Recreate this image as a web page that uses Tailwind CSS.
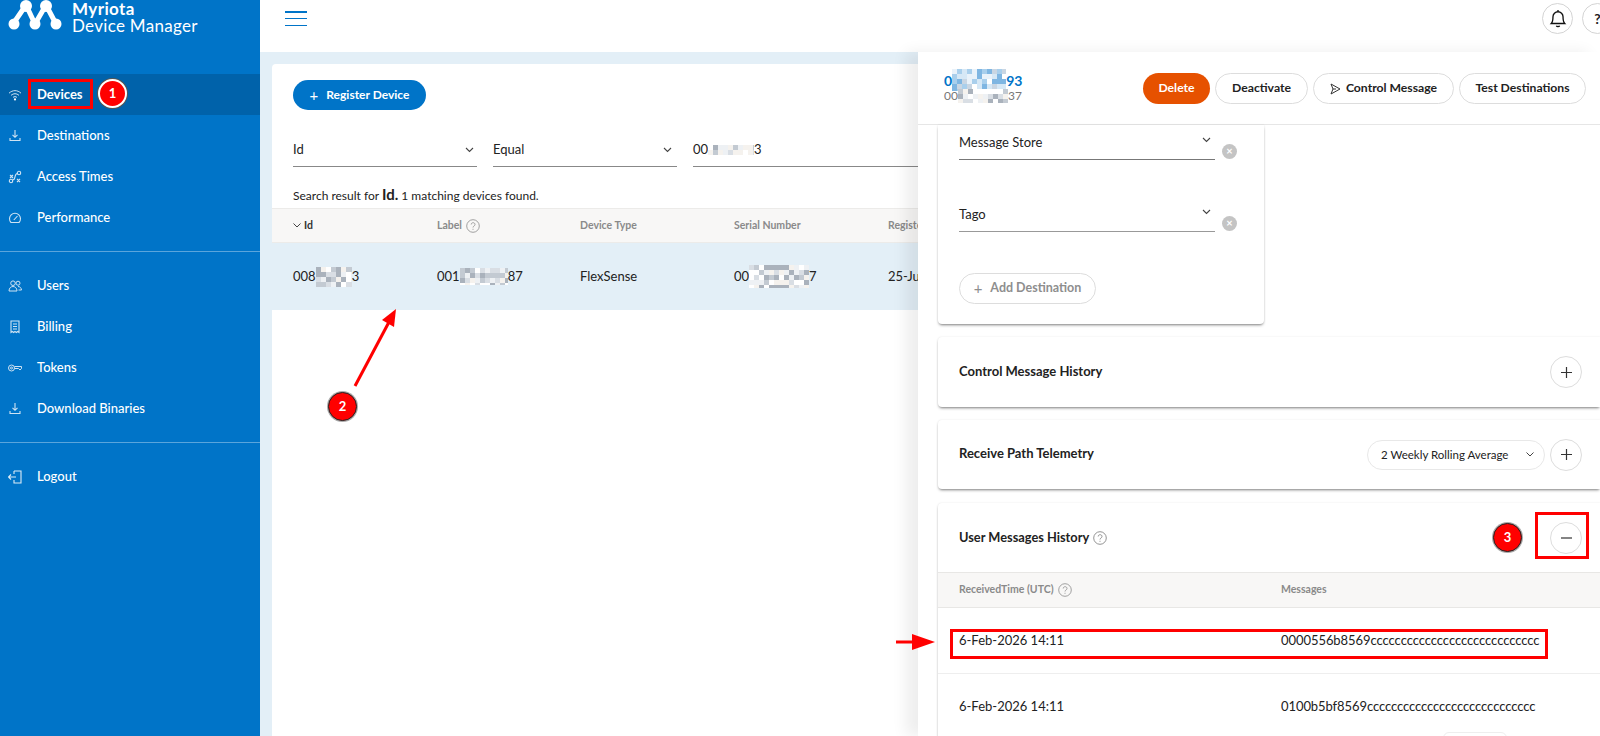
<!DOCTYPE html>
<html lang="en">
<head>
  <meta charset="UTF-8" />
  <title>Myriota Device Manager</title>
  <script src="https://cdn.jsdelivr.net/npm/@tailwindcss/browser@4"></script>
</head>
<body class="relative h-[736px] w-[1600px] overflow-hidden flex bg-white text-[#222] font-['Lato',sans-serif] text-[13px]">

  <!-- Sidebar -->
  <aside class="w-[260px] shrink-0 bg-[#0074c8] text-white font-medium">
    <div class="h-[74px] flex items-start pl-[8px] overflow-hidden">
      <svg class="w-[54px] h-[31px] shrink-0" viewBox="0 0 54 31" fill="none" stroke="#fff">
        <path d="M5 24 L18 5 L27 24 L38 5 L48 24" stroke-width="5" stroke-linejoin="round"/>
        <g fill="#fff" stroke="none">
          <circle cx="6" cy="24" r="5.5"/><circle cx="18" cy="6" r="6"/><circle cx="27" cy="24" r="5.5"/><circle cx="38" cy="6" r="6"/><circle cx="48" cy="24" r="5.5"/>
        </g>
      </svg>
      <div class="ml-[10px] leading-[17px]">
        <div class="text-[17px] font-bold tracking-[0.4px]">Myriota</div>
        <div class="text-[17px] font-normal tracking-[0.3px]">Device Manager</div>
      </div>
    </div>

    <nav>
      <a class="h-[41px] flex items-center bg-[#0062aa] font-bold">
        <svg class="w-[14px] h-[12px] ml-[8px] mr-[15px]" viewBox="0 0 14 12" fill="none" stroke="#cfe3f3" stroke-width="1"><path d="M1 4.200C4.500 .8 9.500 .8 13 4.200M3 6.400c2.400-2.200 5.600-2.200 8 0M5 8.400c1.200-1 2.800-1 4 0"/><circle cx="7" cy="10.400" r="1.100" fill="#fff" stroke="none"/></svg>
        <span>Devices</span>
      </a>
      <a class="h-[41px] flex items-center">
        <svg class="w-[14px] h-[13px] ml-[8px] mr-[15px]" viewBox="0 0 14 13" fill="none" stroke="#cfe3f3" stroke-width="1.100"><path d="M7 1v7M4.500 5.800 7 8.300l2.500-2.500M2 9v2.500h10V9"/></svg>
        <span>Destinations</span>
      </a>
      <a class="h-[41px] flex items-center">
        <svg class="w-[14px] h-[14px] ml-[8px] mr-[15px]" viewBox="0 0 14 14" fill="none" stroke="#cfe3f3" stroke-width="1.100"><circle cx="3" cy="11" r="1.700"/><circle cx="11" cy="3" r="1.700"/><path d="M4.500 10c4 0 1-6 5-6.500M2 5l3 3M5 5 2 8M9 9l3 3M12 9l-3 3"/></svg>
        <span>Access Times</span>
      </a>
      <a class="h-[41px] flex items-center">
        <svg class="w-[14px] h-[12px] ml-[8px] mr-[15px]" viewBox="0 0 14 12" fill="none" stroke="#cfe3f3" stroke-width="1.100"><path d="M3 10.500a5.500 5.500 0 1 1 8 0zM5.800 8 9.500 4"/></svg>
        <span>Performance</span>
      </a>
    </nav>

    <div class="mt-[13px] border-t border-[#5aa5dc]"></div>

    <nav class="mt-[13px]">
      <a class="h-[41px] flex items-center">
        <svg class="w-[14px] h-[12px] ml-[8px] mr-[15px]" viewBox="0 0 14 12" fill="none" stroke="#cfe3f3" stroke-width="1"><circle cx="5" cy="3.200" r="2.300"/><circle cx="10" cy="3.200" r="2"/><path d="M1 11c0-6 8-6 8 0zM10 6.500c2 0 3.300 1.500 3.500 3.500H10.500"/></svg>
        <span>Users</span>
      </a>
      <a class="h-[41px] flex items-center">
        <svg class="w-[12px] h-[14px] ml-[9px] mr-[16px]" viewBox="0 0 12 14" fill="none" stroke="#cfe3f3" stroke-width="1.100"><path d="M2 1h8v11.500l-1.300-1-1.300 1-1.400-1-1.400 1-1.300-1-1.300 1zM4 4h4M4 6.500h4M4 9h4"/></svg>
        <span>Billing</span>
      </a>
      <a class="h-[41px] flex items-center">
        <svg class="w-[14px] h-[8px] ml-[8px] mr-[15px]" viewBox="0 0 14 8" fill="none" stroke="#cfe3f3" stroke-width="1"><circle cx="3.500" cy="4" r="3"/><circle cx="3.500" cy="4" r="1"/><path d="M6.500 2.500h7v2l-1.500 1.500-1.500-1.500H6.500"/></svg>
        <span>Tokens</span>
      </a>
      <a class="h-[41px] flex items-center">
        <svg class="w-[14px] h-[13px] ml-[8px] mr-[15px]" viewBox="0 0 14 13" fill="none" stroke="#cfe3f3" stroke-width="1.100"><path d="M7 1v7M4.500 5.800 7 8.300l2.500-2.500M2 9v2.500h10V9"/></svg>
        <span>Download Binaries</span>
      </a>
    </nav>

    <div class="mt-[13px] border-t border-[#5aa5dc]"></div>

    <a class="mt-[13px] h-[41px] flex items-center">
      <svg class="w-[14px] h-[14px] ml-[8px] mr-[15px]" viewBox="0 0 14 14" fill="none" stroke="#dcebf6" stroke-width="1.100"><path d="M6 1h7v12H6v-3M6 4V1M0.500 7H8M3 4.500.5 7 3 9.500"/></svg>
      <span>Logout</span>
    </a>
  </aside>

  <!-- Main -->
  <main class="flex-1 min-w-0 flex flex-col">
    <header class="h-[52px] shrink-0 bg-white relative">
      <div class="ml-[25px] mt-[11px] w-[22px] h-[15px] flex flex-col justify-between absolute">
        <span class="block h-[1.500px] bg-[#0074c8]"></span>
        <span class="block h-[1.500px] bg-[#0074c8]"></span>
        <span class="block h-[1.500px] bg-[#0074c8]"></span>
      </div>
    </header>

    <div class="flex-1 bg-[#e3eff7] pt-[12px] pl-[12px] pr-[12px] flex flex-col">
      <section class="flex-1 bg-white rounded-t-[4px] pt-[16px]">
        <div class="px-[21px]">
          <button class="h-[30px] w-[133px] rounded-full bg-[#0074c8] text-white text-[12px] font-bold flex items-center justify-center gap-[8px]">
            <span class="text-[15px] font-normal leading-none">+</span><span>Register Device</span>
          </button>

          <div class="mt-[27px] flex items-stretch">
            <div class="w-[184px] h-[30px] border-b border-[#888] flex items-center justify-between pr-[3px] pb-[3px]">
              <span>Id</span>
              <svg class="w-[9px] h-[6px]" viewBox="0 0 9 6" fill="none" stroke="#444" stroke-width="1.100"><path d="M1 1l3.500 3.500L8 1"/></svg>
            </div>
            <div class="ml-[16px] w-[184px] h-[30px] border-b border-[#888] flex items-center justify-between pr-[5px] pb-[3px]">
              <span>Equal</span>
              <svg class="w-[9px] h-[6px]" viewBox="0 0 9 6" fill="none" stroke="#444" stroke-width="1.100"><path d="M1 1l3.500 3.500L8 1"/></svg>
            </div>
            <div class="ml-[16px] w-[260px] h-[30px] border-b border-[#888] flex items-center pb-[3px]">
              <span>00</span><svg data-mosaic="46,10" class="shrink-0"></svg><span>3</span>
            </div>
          </div>

          <p class="mt-[19px] h-[16px] leading-[16px] text-[12px]">Search result for <b class="text-[15px] font-bold">Id.</b> 1 matching devices found.</p>
        </div>

        <div class="mt-[6px] h-[35px] bg-[#f8f7f6] border-y border-[#ecebe9] px-[21px] grid grid-cols-[144px_143px_154px_154px_1fr] items-center text-[10.500px] font-bold text-[#8a8a8a]">
          <div class="flex items-center gap-[3px] text-[#333]">
            <svg class="w-[8px] h-[5px]" viewBox="0 0 8 5" fill="none" stroke="#444" stroke-width="1"><path d="M.5.500 4 4 7.500.5"/></svg>Id
          </div>
          <div class="flex items-center gap-[4px]">Label
            <svg class="w-[14px] h-[14px]" viewBox="0 0 14 14" fill="none" stroke="#8a8a8a" stroke-width=".8"><circle cx="7" cy="7" r="6.300"/><path d="M5.200 5.500c0-2.400 3.800-2.400 3.800 0 0 1.500-2 1.500-2 3M7 9.800v1"/></svg>
          </div>
          <div>Device Type</div>
          <div>Serial Number</div>
          <div>Registered</div>
        </div>

        <div class="h-[67px] bg-[#e3eff7] px-[21px] grid grid-cols-[144px_143px_154px_154px_1fr] items-center">
          <div class="flex items-center"><span>008</span><svg data-mosaic="36,20" class="shrink-0"></svg><span>3</span></div>
          <div class="flex items-center"><span>001</span><svg data-mosaic="48,17" class="shrink-0"></svg><span>87</span></div>
          <div>FlexSense</div>
          <div class="flex items-center"><span>00</span><svg data-mosaic="60,23" class="shrink-0"></svg><span>7</span></div>
          <div>25-Jun-2025</div>
        </div>
      </section>
    </div>
  </main>

  <!-- Top right buttons -->
  <div class="absolute top-[3px] left-[1542px] flex gap-[9px]">
    <div class="w-[31px] h-[31px] rounded-full border border-[#d4d4d4] bg-white flex items-center justify-center">
      <svg class="w-[18px] h-[19px]" viewBox="0 0 16 17" fill="none" stroke="#111" stroke-width="1.200"><path d="M2 13c1.500-1.500 1.500-3 1.500-6a4.500 4.500 0 0 1 9 0c0 3 0 4.500 1.500 6zM6.500 15c.5 1 2.500 1 3 0M8 1v1.500"/></svg>
    </div>
    <div class="w-[31px] h-[31px] rounded-full border border-[#d4d4d4] bg-white flex items-center justify-center text-[14px] font-bold">?</div>
  </div>

  <!-- Device drawer -->
  <aside class="absolute left-[918px] top-[52px] right-0 bottom-0 bg-white shadow-[-12px_0_14px_rgba(0,0,0,0.07)] flex flex-col overflow-hidden">
    <div class="h-[73px] shrink-0 border-b border-[#e6e6e6] flex items-start justify-between pl-[26px] pr-[14px]">
      <div class="pt-[20px]">
        <div class="h-[16px] flex items-center text-[#0074c8] text-[14px] font-bold"><span>0</span><svg data-mosaic="54,22" data-tone="blue" class="shrink-0"></svg><span>93</span></div>
        <div class="h-[14px] mt-[1px] flex items-center text-[#777] text-[12px]"><span>00</span><svg data-mosaic="50,14" class="shrink-0"></svg><span>37</span></div>
      </div>
      <div class="pt-[21px] flex gap-[5px] text-[12.200px] font-bold">
        <button class="w-[67px] h-[31px] rounded-full bg-[#e65100] text-white">Delete</button>
        <button class="w-[93px] h-[31px] rounded-full border border-[#ddd] bg-white">Deactivate</button>
        <button class="w-[141px] h-[31px] rounded-full border border-[#ddd] bg-white flex items-center justify-center gap-[5px]">
          <svg class="w-[11px] h-[12px]" viewBox="0 0 11 12" fill="none" stroke="#333" stroke-width="1"><path d="M1 1l9 5-9 5 2-5zM3 6h3"/></svg>Control Message
        </button>
        <button class="w-[127px] h-[31px] rounded-full border border-[#ddd] bg-white">Test Destinations</button>
      </div>
    </div>

    <div class="flex-1 pl-[20px] flex flex-col">
      <!-- Destinations card -->
      <section class="w-[326px] h-[199px] shrink-0 rounded-b-[4px] bg-white shadow-[0_2px_3px_-1px_rgba(0,0,0,0.5),0_0_2px_rgba(0,0,0,0.1)] px-[21px] pt-0">
        <div class="flex">
          <div class="w-[256px] h-[35px] border-b border-[#777] flex items-start justify-between pt-[9px] pr-[4px]">
            <span class="leading-[16px]">Message Store</span>
            <svg class="w-[9px] h-[6px] mt-[3px]" viewBox="0 0 9 6" fill="none" stroke="#444" stroke-width="1.100"><path d="M1 1l3.500 3.500L8 1"/></svg>
          </div>
          <div class="ml-[7px] mt-[19px] w-[15px] h-[15px] rounded-full bg-[#c4c4c4] text-white text-[11px] font-bold leading-[14px] text-center">×</div>
        </div>
        <div class="flex mt-[37px]">
          <div class="w-[256px] h-[35px] border-b border-[#999] flex items-start justify-between pt-[9px] pr-[4px]">
            <span class="leading-[16px]">Tago</span>
            <svg class="w-[9px] h-[6px] mt-[3px]" viewBox="0 0 9 6" fill="none" stroke="#444" stroke-width="1.100"><path d="M1 1l3.500 3.500L8 1"/></svg>
          </div>
          <div class="ml-[7px] mt-[19px] w-[15px] h-[15px] rounded-full bg-[#c4c4c4] text-white text-[11px] font-bold leading-[14px] text-center">×</div>
        </div>
        <button class="mt-[41px] w-[137px] h-[31px] rounded-full border border-[#ddd] text-[#8e8e8e] text-[12.500px] font-bold flex items-center justify-center gap-[8px]">
          <span class="text-[15px] font-normal leading-none">+</span><span>Add Destination</span>
        </button>
      </section>

      <!-- Control Message History -->
      <section class="mt-[13px] h-[70px] shrink-0 rounded-l-[4px] bg-white shadow-[0_2px_3px_-1px_rgba(0,0,0,0.5),0_0_2px_rgba(0,0,0,0.1)] pl-[21px] pr-[18px] flex items-center justify-between">
        <h3 class="font-bold text-[13px] -mt-[1px]">Control Message History</h3>
        <button class="w-[32px] h-[32px] rounded-full border border-[#ddd] flex items-center justify-center">
          <svg class="w-[11px] h-[11px]" viewBox="0 0 11 11" stroke="#333" stroke-width="1.200"><path d="M5.500 0v11M0 5.500h11"/></svg>
        </button>
      </section>

      <!-- Receive Path Telemetry -->
      <section class="mt-[13px] h-[69px] shrink-0 rounded-l-[4px] bg-white shadow-[0_2px_3px_-1px_rgba(0,0,0,0.5),0_0_2px_rgba(0,0,0,0.1)] pl-[21px] pr-[18px] flex items-center justify-between">
        <h3 class="font-bold text-[13px] -mt-[1px]">Receive Path Telemetry</h3>
        <div class="flex items-center gap-[5px]">
          <div class="w-[178px] h-[30px] rounded-full border border-[#e8e8e8] text-[11.500px] pl-[13px] pr-[10px] flex items-center justify-between">
            <span>2 Weekly Rolling Average</span>
            <svg class="w-[8px] h-[5px]" viewBox="0 0 8 5" fill="none" stroke="#444" stroke-width="1"><path d="M.5.500 4 4 7.500.5"/></svg>
          </div>
          <button class="w-[32px] h-[32px] rounded-full border border-[#ddd] flex items-center justify-center">
            <svg class="w-[11px] h-[11px]" viewBox="0 0 11 11" stroke="#333" stroke-width="1.200"><path d="M5.500 0v11M0 5.500h11"/></svg>
          </button>
        </div>
      </section>

      <!-- User Messages History -->
      <section class="mt-[14px] flex-1 rounded-tl-[4px] bg-white shadow-[0_2px_3px_-1px_rgba(0,0,0,0.5),0_0_2px_rgba(0,0,0,0.1)]">
        <div class="h-[69px] pl-[21px] pr-[18px] flex items-center justify-between">
          <h3 class="font-bold text-[12.800px] flex items-center gap-[4px]">User Messages History
            <svg class="w-[14px] h-[14px]" viewBox="0 0 14 14" fill="none" stroke="#777" stroke-width=".8"><circle cx="7" cy="7" r="6.300"/><path d="M5.200 5.500c0-2.400 3.800-2.400 3.800 0 0 1.500-2 1.500-2 3M7 9.800v1"/></svg>
          </h3>
          <button class="w-[32px] h-[32px] rounded-full border border-[#ddd] flex items-center justify-center">
            <svg class="w-[11px] h-[2px]" viewBox="0 0 11 2" stroke="#333" stroke-width="1.200"><path d="M0 1h11"/></svg>
          </button>
        </div>
        <div class="h-[36px] bg-[#f8f7f6] border-y border-[#e8e7e5] pl-[21px] grid grid-cols-[322px_1fr] items-center text-[10.500px] font-bold text-[#8a8a8a]">
          <div class="flex items-center gap-[4px]">ReceivedTime (UTC)
            <svg class="w-[14px] h-[14px]" viewBox="0 0 14 14" fill="none" stroke="#8a8a8a" stroke-width=".8"><circle cx="7" cy="7" r="6.300"/><path d="M5.200 5.500c0-2.400 3.800-2.400 3.800 0 0 1.500-2 1.500-2 3M7 9.800v1"/></svg>
          </div>
          <div>Messages</div>
        </div>
        <div class="h-[66px] border-b border-[#eee] pl-[21px] grid grid-cols-[322px_1fr] items-center">
          <div>6-Feb-2026 14:11</div>
          <div class="tracking-[-0.06px]">0000556b8569cccccccccccccccccccccccccccc</div>
        </div>
        <div class="h-[66px] pl-[21px] grid grid-cols-[322px_1fr] items-center">
          <div>6-Feb-2026 14:11</div>
          <div class="tracking-[-0.08px]">0100b5bf8569cccccccccccccccccccccccccccc</div>
        </div>
      </section>
    </div>
  </aside>

  <!-- faint button peeking in at the bottom edge of the drawer -->
  <div class="absolute left-[1443px] top-[732px] w-[64px] h-[20px] rounded-t-[6px] border border-[#eee] bg-white"></div>

  <!-- Annotations -->
  <div class="absolute left-[28px] top-[79px] w-[65px] h-[30px] border-[3px] border-[#f00]"></div>
  <div class="absolute left-[98px] top-[79px] w-[29px] h-[29px] rounded-full bg-[#f00] border-2 border-white ring-1 ring-[#555] text-white text-[13px] font-bold flex items-center justify-center">1</div>

  <div class="absolute left-[328px] top-[392px] w-[29px] h-[29px] rounded-full bg-[#f00] border border-[#222] ring-1 ring-[#aaa] text-white text-[13px] font-bold flex items-center justify-center">2</div>

  <div class="absolute left-[1535px] top-[512px] w-[54px] h-[47px] border-[3px] border-[#f00]"></div>
  <div class="absolute left-[1493px] top-[523px] w-[29px] h-[29px] rounded-full bg-[#f00] border border-[#222] ring-1 ring-[#aaa] text-white text-[13px] font-bold flex items-center justify-center">3</div>

  <div class="absolute left-[950px] top-[629px] w-[598px] h-[30px] border-[3px] border-[#f00]"></div>

  <svg class="absolute left-0 top-0 w-[1600px] h-[736px] pointer-events-none" viewBox="0 0 1600 736">
    <path d="M355 386 389 322" stroke="#f00" stroke-width="3"/>
    <path d="M396 309 382 320 394 327z" fill="#f00"/>
    <path d="M896 642H914" stroke="#f00" stroke-width="3"/>
    <path d="M935 642 912 634V650z" fill="#f00"/>
  </svg>

  <script>
    // pixelated redaction blocks, seeded so each render is the same
    let seed = 7;
    const rnd = () => (seed = (seed * 16807) % 2147483647) / 2147483647;
    const grays = ["#ffffff", "#eef1f4", "#d9dee4", "#c3cad2", "#f5f2ee", "#aab2bc"];
    const blues = ["#ffffff", "#d6e8f6", "#a9cfec", "#7fb6e2", "#c9d6e3", "#e9f2fa"];
    document.querySelectorAll("svg[data-mosaic]").forEach(svg => {
      const [w, h] = svg.dataset.mosaic.split(",").map(Number);
      const colors = svg.dataset.tone === "blue" ? blues : grays;
      svg.setAttribute("width", w);
      svg.setAttribute("height", h);
      svg.style.margin = "-6px 0";
      let html = "";
      for (let y = 0; y < h; y += 5) {
        for (let x = 0; x < w; x += 5) {
          html += `<rect x="${x}" y="${y}" width="5" height="5" fill="${colors[Math.floor(rnd() * colors.length)]}"/>`;
        }
      }
      svg.innerHTML = html;
    });
  </script>
</body>
</html>
